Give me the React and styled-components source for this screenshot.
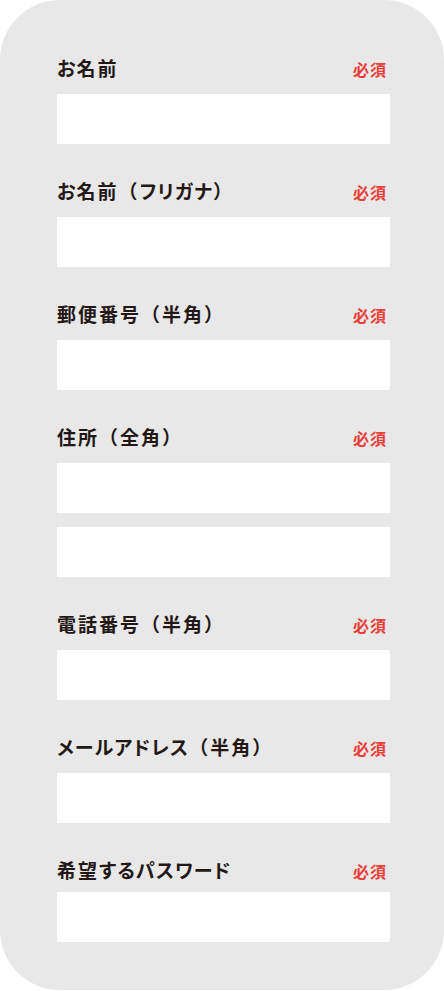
import React from 'react'
import styled, { createGlobalStyle } from 'styled-components'

const GlobalStyle = createGlobalStyle`
html, body {
  margin: 0;
  padding: 0;
  background: #ffffff;
}
* {
  box-sizing: border-box;
}
`

const Panel = styled.form`
display: flex;
flex-direction: column;
gap: 35px;
width: 444px;
height: 990px;
padding: 56px 54px 47px 57px;
background: #e8e8e8;
border-radius: 60px;
font-family: "Noto Sans CJK JP", "Noto Sans", sans-serif;
`

const Field = styled.div`
display: flex;
flex-direction: column;
`

const LabelRow = styled.div`
display: flex;
justify-content: space-between;
align-items: baseline;
margin-bottom: ${(p) => (p.$tight ? '10px' : '14px')};
`

const Label = styled.label`
font-size: 19px;
line-height: 24px;
font-weight: 700;
letter-spacing: 2px;
color: #231815;
`

const Kana = styled.span`
font-feature-settings: "palt";
letter-spacing: 1.2px;
`

const Required = styled.span`
padding-right: 3px;
font-size: 16px;
line-height: 1;
font-weight: 700;
letter-spacing: 1px;
color: #e83f3a;
`

const Inputs = styled.div`
display: flex;
flex-direction: column;
gap: 14px;
`

const Input = styled.input`
display: block;
width: 100%;
height: 50px;
margin: 0;
padding: 0 14px;
border: none;
outline: none;
background: #ffffff;
font-family: inherit;
font-size: 16px;
color: #231815;
`

const fields = [
  { id: 'name', label: 'お名前', inputs: 1 },
  { id: 'kana', label: 'お名前（フリガナ）', inputs: 1 },
  { id: 'zip', label: '郵便番号（半角）', inputs: 1 },
  { id: 'address', label: '住所（全角）', inputs: 2 },
  { id: 'tel', label: '電話番号（半角）', inputs: 1 },
  { id: 'mail', label: 'メールアドレス（半角）', inputs: 1, type: 'email' },
  { id: 'password', label: '希望するパスワード', inputs: 1, type: 'password', tight: true },
]

// kana runs get proportional widths, kanji and brackets stay full width
const kanaRun = /([ぁ-ゖァ-ヺー]+)/
function renderLabel(text) {
  return text.split(kanaRun).map((part, i) =>
    i % 2 === 1 ? <Kana key={i}>{part}</Kana> : part
  )
}

export default function App() {
  return (
    <>
      <GlobalStyle />
      <Panel onSubmit={(e) => e.preventDefault()}>
        {fields.map((field) => (
          <Field key={field.id}>
            <LabelRow $tight={field.tight}>
              <Label htmlFor={field.id}>{renderLabel(field.label)}</Label>
              <Required>必須</Required>
            </LabelRow>
            <Inputs>
              {Array.from({ length: field.inputs }).map((_, i) => (
                <Input
                  key={i}
                  id={i === 0 ? field.id : field.id + '-' + i}
                  type={field.type || 'text'}
                />
              ))}
            </Inputs>
          </Field>
        ))}
      </Panel>
    </>
  )
}
